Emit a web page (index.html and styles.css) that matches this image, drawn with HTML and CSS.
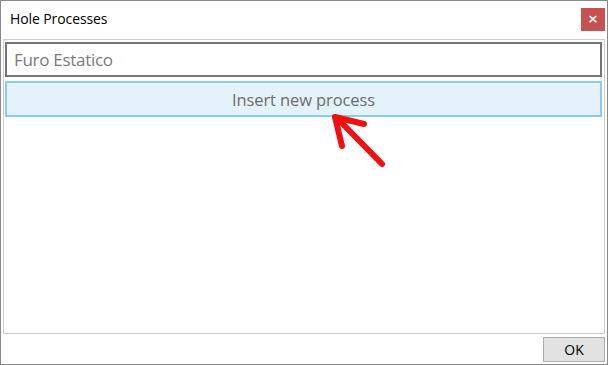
FILE: index.html
```html
<!DOCTYPE html>
<html lang="en">
<head>
    <meta charset="UTF-8">
    <title>Hole Processes</title>
    <link rel="stylesheet" href="styles.css">
</head>
<body>
<div class="window">
    <div class="titleBar">
        <span class="title">Hole Processes</span>
        <div class="closeBtn">&#215;</div>
    </div>
    <div class="panel">
        <div class="textBox">Furo Estatico</div>
        <div class="insertBtn">Insert new process</div>
    </div>
    <div class="footer">
        <div class="okBtn">OK</div>
    </div>
    <svg class="arrow" width="608" height="365" viewBox="0 0 608 365">
        <g stroke="#f01010" stroke-width="6" stroke-linecap="round" stroke-linejoin="round" fill="none">
            <path d="M337 118 L382 164"/>
            <path d="M342 146 L335 117 L364 124"/>
        </g>
    </svg>
</div>
</body>
</html>
```

FILE: styles.css
```css
*{
    padding:0px;
    margin:0px;
    box-sizing: border-box;
}
body{
    background-color: #fff;
    font-family: "Open Sans", "Noto Sans", sans-serif;
}
.window{
    position: relative;
    width:608px;
    height:365px;
    border:1px solid #8a8a8a;
    display: flex;
    flex-direction: column;
    background-color: #fff;
}
.window .titleBar{
    height:38px;
    display: flex;
    justify-content: space-between;
    align-items: flex-start;
    padding-left:9px;
}
.window .title{
    font-size:14px;
    line-height: 14px;
    margin-top:11px;
    color:#000;
    letter-spacing: -0.1px;
}
.window .closeBtn{
    width:24px;
    height:23px;
    margin-top:7px;
    margin-right:2px;
    background-color: #c75050;
    color:#fff;
    font-family: "DejaVu Sans", sans-serif;
    font-size:13px;
    font-weight: bold;
    line-height: 22px;
    text-align: center;
}
.window .panel{
    height:295px;
    margin:0px 2px;
    border:1px solid #cdcdcd;
    padding:2px 2px 0px 1px;
    display: flex;
    flex-direction: column;
    gap:4px;
}
.window .textBox{
    height:35px;
    border:2px solid #767676;
    padding-left:7px;
    font-size:17px;
    line-height: 32px;
    color:#7a7a7a;
    letter-spacing: -0.3px;
}
.window .insertBtn{
    height:36px;
    border:2px solid #8ccbec;
    background-color: #e4f2fb;
    text-align: center;
    font-size:16.5px;
    line-height: 33px;
    color:#6d6d6d;
    letter-spacing: -0.1px;
}
.window .footer{
    flex:1;
    display: flex;
    justify-content: flex-end;
    align-items: center;
    padding-right:2px;
}
.window .okBtn{
    width:62px;
    height:25px;
    border:1px solid #adadad;
    background-color: #e1e1e1;
    text-align: center;
    font-size:14px;
    line-height: 23px;
    color:#000;
}
.window .arrow{
    position: absolute;
    left:-1px;
    top:-1px;
    pointer-events: none;
}
```
